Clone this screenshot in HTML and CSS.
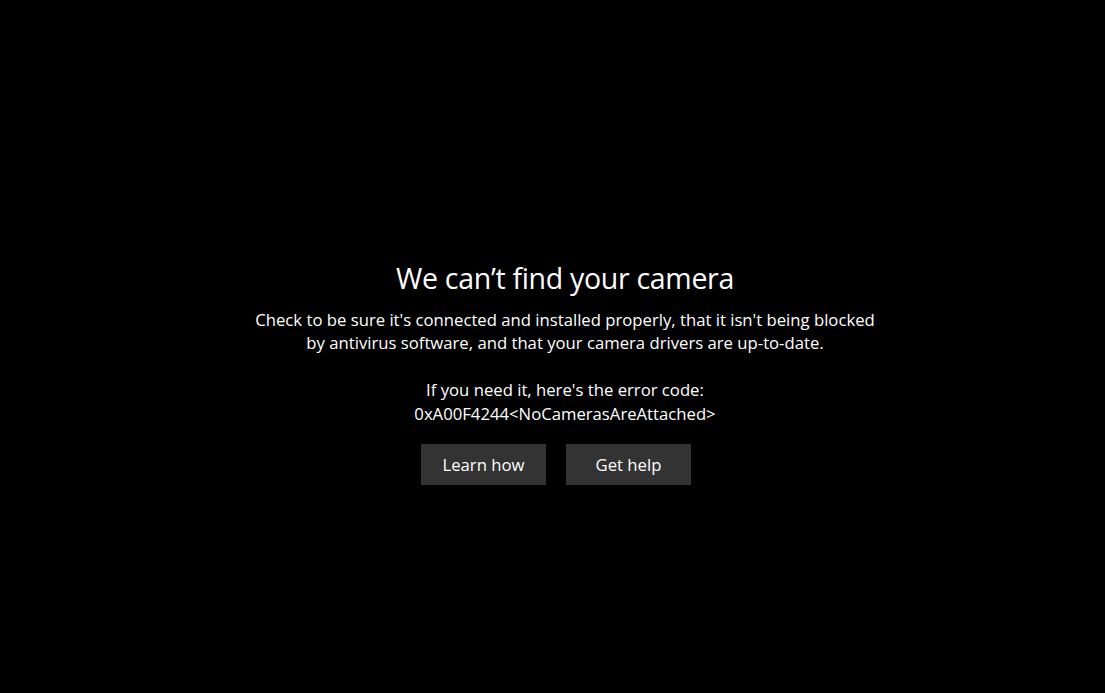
FILE: index.html
```html
<!DOCTYPE html>
<html>
<head>
<meta charset="utf-8">
<link rel="stylesheet" href="styles.css">
</head>
<body>
<main class="screen">
  <section class="panel">
    <h1 class="title">We can’t find your camera</h1>
    <p class="desc">Check to be sure it's connected and installed properly, that it isn't being blocked<br>by antivirus software, and that your camera drivers are up-to-date.</p>
    <p class="code">If you need it, here's the error code:<br>0xA00F4244&lt;NoCamerasAreAttached&gt;</p>
    <div class="actions">
      <button class="btn">Learn how</button>
      <button class="btn">Get help</button>
    </div>
  </section>
</main>
</body>
</html>
```
FILE: styles.css
```css
html, body {
  margin: 0;
  padding: 0;
  background: #000;
  width: 1105px;
  height: 693px;
  overflow: hidden;
}
.screen {
  width: 1105px;
  height: 693px;
  display: flex;
  justify-content: center;
  padding-left: 25px;
  box-sizing: border-box;
}
.panel {
  display: flex;
  flex-direction: column;
  align-items: center;
  padding-top: 258px;
  color: #fff;
  font-family: "Open Sans", "Noto Sans", sans-serif;
  text-align: center;
}
.title {
  margin: 0;
  font-weight: 400;
  font-size: 28.5px;
  line-height: 40px;
  letter-spacing: -0.3px;
}
.desc {
  margin: 10px 0 0;
  font-size: 16.7px;
  line-height: 23px;
  letter-spacing: 0;
}
.code {
  margin: 24px 0 0;
  font-size: 16.7px;
  line-height: 24px;
  letter-spacing: 0;
}
.actions {
  display: flex;
  gap: 20px;
  margin-top: 18px;
  margin-left: -18px;
}
.btn {
  width: 125px;
  height: 41px;
  border: none;
  background: #333333;
  color: #fff;
  font-family: "Open Sans", "Noto Sans", sans-serif;
  font-size: 16.7px;
  letter-spacing: 0;
  padding: 0;
}
```
